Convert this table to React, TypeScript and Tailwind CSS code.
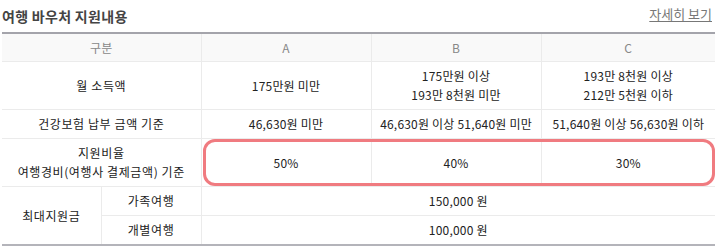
import React from "react";

const font = { fontFamily: '"Noto Sans CJK KR", "Noto Sans", sans-serif' };

export default function App() {
  const cell = "border border-[#ebebeb] text-center align-middle text-[12px] leading-[19px] text-[#222] tracking-[0.2px]";
  const label = "tracking-[0.6px]";
  return (
    <div className="w-[715px] h-[251px] bg-white pl-[2px]" style={font}>
      <div className="flex items-end justify-between h-[32px] pb-[7px]">
        <h2 className="text-[14px] font-bold text-[#444] leading-[18px] tracking-[0.3px]">여행 바우처 지원내용</h2>
        <a href="#" className="text-[13px] text-[#777] underline underline-offset-2 leading-[18px] pr-[3px] mb-[2px]">자세히 보기</a>
      </div>
      <div className="relative">
        <table className="w-[713px] table-fixed border-collapse border-t-2 border-t-[#a4a4ab] border-b-2 border-b-[#b4b4ba]">
          <colgroup>
            <col className="w-[99px]" />
            <col className="w-[100px]" />
            <col className="w-[170px]" />
            <col className="w-[170px]" />
            <col className="w-[174px]" />
          </colgroup>
          <thead>
            <tr className="h-[28px] bg-[#f9f9f9]">
              <th colSpan={2} className={`${cell} border-l-0 font-normal !text-[#888]`}>구분</th>
              <th className={`${cell} font-normal !text-[#888]`}>A</th>
              <th className={`${cell} font-normal !text-[#888]`}>B</th>
              <th className={`${cell} border-r-0 font-normal !text-[#888]`}>C</th>
            </tr>
          </thead>
          <tbody>
            <tr className="h-[48px]">
              <td colSpan={2} className={`${cell} ${label} border-l-0`}>월 소득액</td>
              <td className={cell}>175만원 미만</td>
              <td className={cell}>175만원 이상<br />193만 8천원 미만</td>
              <td className={`${cell} border-r-0`}>193만 8천원 이상<br />212만 5천원 이하</td>
            </tr>
            <tr className="h-[29px]">
              <td colSpan={2} className={`${cell} ${label} border-l-0`}>건강보험 납부 금액 기준</td>
              <td className={cell}>46,630원 미만</td>
              <td className={cell}>46,630원 이상 51,640원 미만</td>
              <td className={`${cell} border-r-0`}>51,640원 이상 56,630원 이하</td>
            </tr>
            <tr className="h-[48px]">
              <td colSpan={2} className={`${cell} ${label} border-l-0`}>지원비율<br />여행경비(여행사 결제금액) 기준</td>
              <td className={cell}>50%</td>
              <td className={cell}>40%</td>
              <td className={`${cell} border-r-0`}>30%</td>
            </tr>
            <tr className="h-[29px]">
              <td rowSpan={2} className={`${cell} ${label} border-l-0`}>최대지원금</td>
              <td className={`${cell} ${label}`}>가족여행</td>
              <td colSpan={3} className={`${cell} border-r-0`}>150,000 원</td>
            </tr>
            <tr className="h-[30px]">
              <td className={`${cell} ${label}`}>개별여행</td>
              <td colSpan={3} className={`${cell} border-r-0`}>100,000 원</td>
            </tr>
          </tbody>
        </table>
        <div className="absolute left-[201px] top-[107px] w-[512px] h-[47px] border-[3px] border-[#f07b80] rounded-[12px] pointer-events-none" />
      </div>
    </div>
  );
}
